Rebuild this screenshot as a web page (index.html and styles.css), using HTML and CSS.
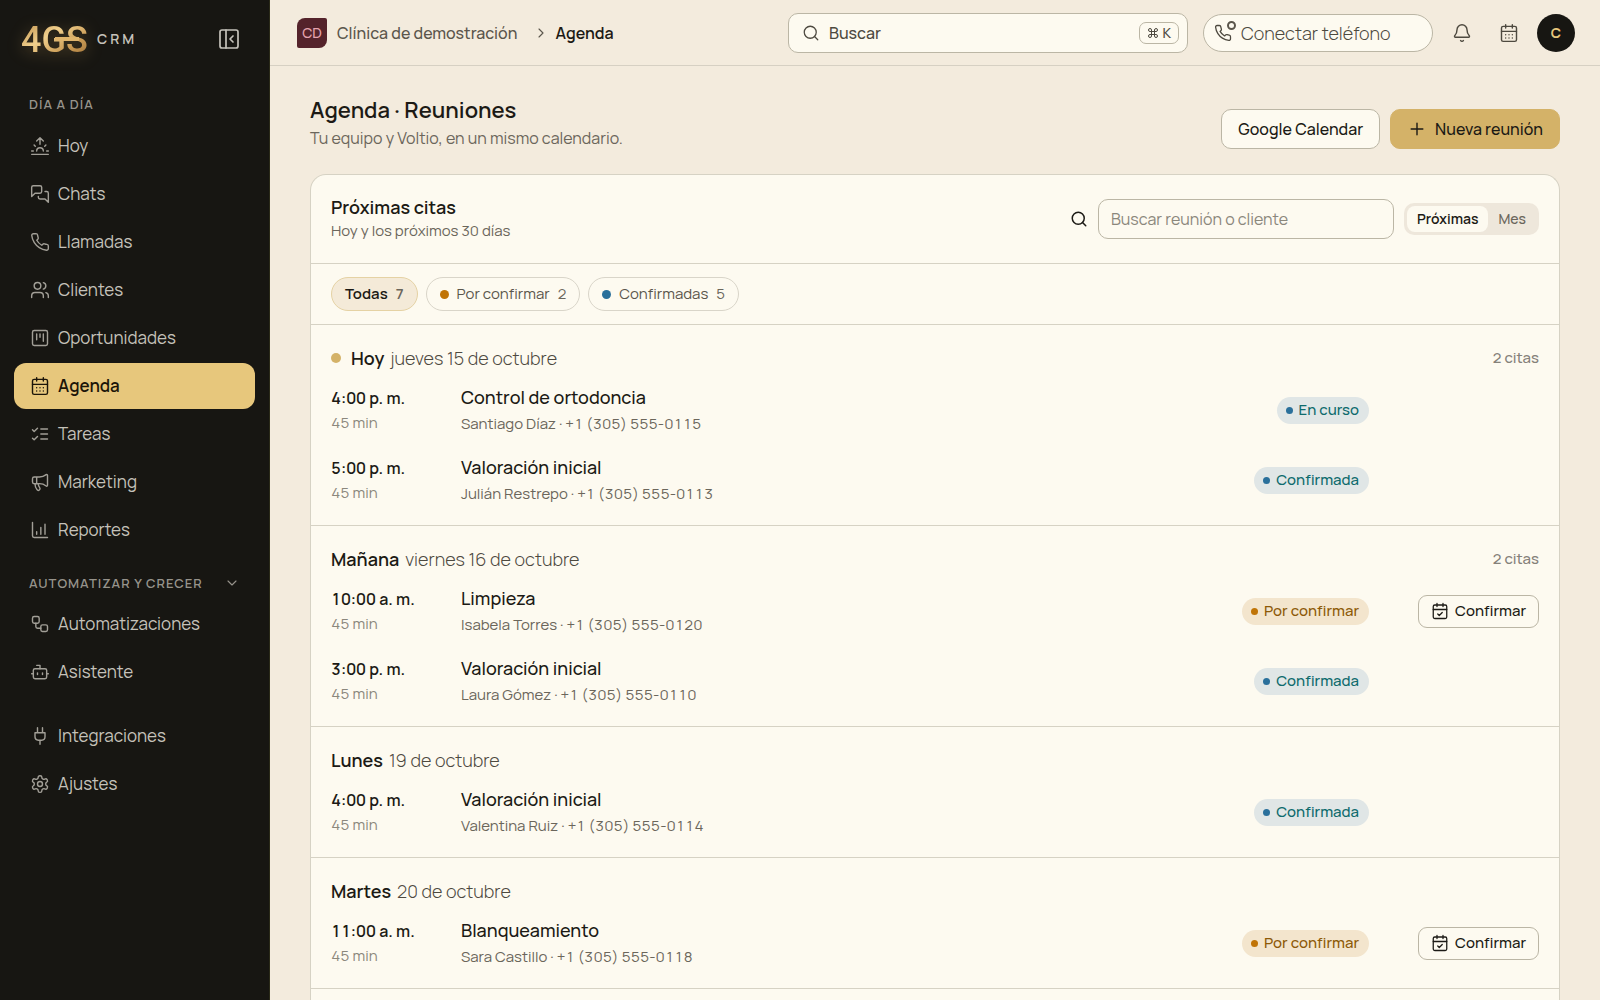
FILE: index.html
```html
<!DOCTYPE html>
<html lang="es">

<head>
    <meta charset="UTF-8">
    <meta name="viewport" content="width=device-width, initial-scale=1.0">
    <title>Agenda</title>
    <link rel="stylesheet" href="styles.css">
</head>

<body>
    <!-- Icon sprite -->
    <svg class="sprite" aria-hidden="true">
        <symbol id="i-calendar" viewBox="0 0 24 24"><path d="M8 2v4M16 2v4M3 10h18M8 14h.01M12 14h.01M16 14h.01M8 18h.01M12 18h.01M16 18h.01"/><rect x="3" y="4" width="18" height="18" rx="2"/></symbol>
        <symbol id="i-calendar-check" viewBox="0 0 24 24"><path d="M8 2v4M16 2v4M3 10h18M9 16l2 2 4-4"/><rect x="3" y="4" width="18" height="18" rx="2"/></symbol>
        <symbol id="i-search" viewBox="0 0 24 24"><circle cx="11" cy="11" r="8"/><path d="m21 21-4.3-4.3"/></symbol>
        <symbol id="i-phone" viewBox="0 0 24 24"><path d="M22 16.92v3a2 2 0 0 1-2.18 2 19.79 19.79 0 0 1-8.63-3.07 19.5 19.5 0 0 1-6-6 19.79 19.79 0 0 1-3.07-8.67A2 2 0 0 1 4.11 2h3a2 2 0 0 1 2 1.72 12.84 12.84 0 0 0 .7 2.81 2 2 0 0 1-.45 2.11L8.09 9.91a16 16 0 0 0 6 6l1.27-1.27a2 2 0 0 1 2.11-.45 12.84 12.84 0 0 0 2.81.7A2 2 0 0 1 22 16.92z"/></symbol>
    </svg>

    <div class="layout">
        <aside class="sidebar">
            <div class="brand">
                <svg class="logo" width="68" height="30" viewBox="0 0 68 30" role="img" aria-label="4GS">
                    <defs>
                        <linearGradient id="gold" x1="0" y1="0" x2="1" y2="1">
                            <stop offset="0" stop-color="#b98a45"/>
                            <stop offset="0.4" stop-color="#f0cf8c"/>
                            <stop offset="0.7" stop-color="#c99a54"/>
                            <stop offset="1" stop-color="#9a6c34"/>
                        </linearGradient>
                    </defs>
                    <text class="logo-text" x="0" y="28" fill="url(#gold)">4GS</text>
                    <rect x="34" y="13" width="24" height="4" fill="#dfb46c"/>
                </svg>
                <span class="brand-name">CRM</span>
                <button class="collapse" aria-label="Contraer menú">
                    <svg class="icon icon-lg" viewBox="0 0 24 24"><rect x="3" y="3" width="18" height="18" rx="2"/><path d="M9 3v18M16 15l-3-3 3-3"/></svg>
                </button>
            </div>

            <h2 class="nav-title">DÍA A DÍA</h2>
            <nav class="nav">
                <a href="#"><svg class="icon" viewBox="0 0 24 24"><path d="M12 2v8M4.93 10.93l1.41 1.41M2 18h2M20 18h2M19.07 10.93l-1.41 1.41M22 22H2M8 6l4-4 4 4M16 18a4 4 0 0 0-8 0"/></svg>Hoy</a>
                <a href="#"><svg class="icon" viewBox="0 0 24 24"><path d="M14 9a2 2 0 0 1-2 2H6l-4 4V4a2 2 0 0 1 2-2h8a2 2 0 0 1 2 2zM18 9h2a2 2 0 0 1 2 2v11l-4-4h-6a2 2 0 0 1-2-2v-1"/></svg>Chats</a>
                <a href="#"><svg class="icon"><use href="#i-phone"/></svg>Llamadas</a>
                <a href="#"><svg class="icon" viewBox="0 0 24 24"><path d="M16 21v-2a4 4 0 0 0-4-4H6a4 4 0 0 0-4 4v2"/><circle cx="9" cy="7" r="4"/><path d="M22 21v-2a4 4 0 0 0-3-3.87M16 3.13a4 4 0 0 1 0 7.75"/></svg>Clientes</a>
                <a href="#"><svg class="icon" viewBox="0 0 24 24"><rect x="3" y="3" width="18" height="18" rx="2"/><path d="M8 7v7M12 7v4M16 7v9"/></svg>Oportunidades</a>
                <a href="#" class="active"><svg class="icon"><use href="#i-calendar"/></svg>Agenda</a>
                <a href="#"><svg class="icon" viewBox="0 0 24 24"><path d="m3 17 2 2 4-4M3 7l2 2 4-4M13 6h8M13 12h8M13 18h8"/></svg>Tareas</a>
                <a href="#"><svg class="icon" viewBox="0 0 24 24"><path d="M11 6a13 13 0 0 0 8.4-2.8A1 1 0 0 1 21 4v12a1 1 0 0 1-1.6.8A13 13 0 0 0 11 14H5a2 2 0 0 1-2-2V8a2 2 0 0 1 2-2zM6 14a12 12 0 0 0 2.4 7.2 2 2 0 0 0 3.2-2.4A8 8 0 0 1 10 14M8 6v8"/></svg>Marketing</a>
                <a href="#"><svg class="icon" viewBox="0 0 24 24"><path d="M3 3v16a2 2 0 0 0 2 2h16M13 17V9M18 17V5M8 17v-3"/></svg>Reportes</a>
            </nav>

            <button class="nav-title nav-toggle">AUTOMATIZAR Y CRECER
                <svg class="icon icon-sm" viewBox="0 0 24 24"><path d="m6 9 6 6 6-6"/></svg>
            </button>
            <nav class="nav">
                <a href="#"><svg class="icon" viewBox="0 0 24 24"><rect x="3" y="3" width="8" height="8" rx="2"/><path d="M7 11v4a2 2 0 0 0 2 2h4"/><rect x="13" y="13" width="8" height="8" rx="2"/></svg>Automatizaciones</a>
                <a href="#"><svg class="icon" viewBox="0 0 24 24"><path d="M12 8V4H8"/><rect x="4" y="8" width="16" height="12" rx="2"/><path d="M2 14h2M20 14h2M15 13v2M9 13v2"/></svg>Asistente</a>
            </nav>
            <nav class="nav nav-bottom">
                <a href="#"><svg class="icon" viewBox="0 0 24 24"><path d="M12 22v-5M9 8V2M15 8V2M18 8v5a4 4 0 0 1-4 4h-4a4 4 0 0 1-4-4V8z"/></svg>Integraciones</a>
                <a href="#"><svg class="icon" viewBox="0 0 24 24"><path d="M12.22 2h-.44a2 2 0 0 0-2 2v.18a2 2 0 0 1-1 1.73l-.43.25a2 2 0 0 1-2 0l-.15-.08a2 2 0 0 0-2.73.73l-.22.38a2 2 0 0 0 .73 2.73l.15.1a2 2 0 0 1 1 1.72v.51a2 2 0 0 1-1 1.74l-.15.09a2 2 0 0 0-.73 2.73l.22.38a2 2 0 0 0 2.73.73l.15-.08a2 2 0 0 1 2 0l.43.25a2 2 0 0 1 1 1.73V20a2 2 0 0 0 2 2h.44a2 2 0 0 0 2-2v-.18a2 2 0 0 1 1-1.73l.43-.25a2 2 0 0 1 2 0l.15.08a2 2 0 0 0 2.73-.73l.22-.39a2 2 0 0 0-.73-2.73l-.15-.08a2 2 0 0 1-1-1.74v-.5a2 2 0 0 1 1-1.74l.15-.09a2 2 0 0 0 .73-2.73l-.22-.38a2 2 0 0 0-2.73-.73l-.15.08a2 2 0 0 1-2 0l-.43-.25a2 2 0 0 1-1-1.73V4a2 2 0 0 0-2-2z"/><circle cx="12" cy="12" r="3"/></svg>Ajustes</a>
            </nav>
        </aside>

        <div class="page">
            <header class="topbar">
                <div class="crumbs">
                    <span class="org-badge">CD</span>
                    <a href="#">Clínica de demostración</a>
                    <svg class="icon icon-sm" viewBox="0 0 24 24"><path d="m9 18 6-6-6-6"/></svg>
                    <strong>Agenda</strong>
                </div>
                <button class="global-search">
                    <svg class="icon icon-md"><use href="#i-search"/></svg>
                    <span>Buscar</span>
                    <kbd><svg class="icon icon-cmd" viewBox="0 0 24 24"><path d="M15 6v12a3 3 0 1 0 3-3H6a3 3 0 1 0 3 3V6a3 3 0 1 0-3 3h12a3 3 0 1 0-3-3"/></svg>K</kbd>
                </button>
                <button class="phone-button">
                    <span class="phone-icon">
                        <svg class="icon icon-md"><use href="#i-phone"/></svg>
                        <i class="phone-status"></i>
                    </span>
                    Conectar teléfono
                </button>
                <div class="topbar-icons">
                    <button class="icon-button" aria-label="Notificaciones">
                        <svg class="icon" viewBox="0 0 24 24"><path d="M10.27 21a2 2 0 0 0 3.46 0M3.26 15.33A1 1 0 0 0 4 17h16a1 1 0 0 0 .74-1.67C19.41 13.96 18 12.5 18 8A6 6 0 0 0 6 8c0 4.5-1.41 5.96-2.74 7.33"/></svg>
                    </button>
                    <button class="icon-button" aria-label="Calendario">
                        <svg class="icon"><use href="#i-calendar"/></svg>
                    </button>
                    <button class="avatar">C</button>
                </div>
            </header>

            <main class="content">
                <div class="page-head">
                    <div>
                        <h1>Agenda · Reuniones</h1>
                        <p>Tu equipo y Voltio, en un mismo calendario.</p>
                    </div>
                    <div class="page-actions">
                        <button class="btn">Google Calendar</button>
                        <button class="btn btn-gold"><svg class="icon" viewBox="0 0 24 24"><path d="M5 12h14M12 5v14"/></svg>Nueva reunión</button>
                    </div>
                </div>

                <section class="card">
                    <div class="card-head">
                        <div>
                            <h2>Próximas citas</h2>
                            <p>Hoy y los próximos 30 días</p>
                        </div>
                        <div class="card-tools">
                            <label for="search" aria-label="Buscar reunión o cliente"><svg class="icon icon-md"><use href="#i-search"/></svg></label>
                            <input id="search" type="text" placeholder="Buscar reunión o cliente">
                            <div class="segmented">
                                <button class="selected">Próximas</button>
                                <button>Mes</button>
                            </div>
                        </div>
                    </div>

                    <div class="filters">
                        <button class="chip selected">Todas <span>7</span></button>
                        <button class="chip"><i class="dot orange"></i>Por confirmar <span>2</span></button>
                        <button class="chip"><i class="dot blue"></i>Confirmadas <span>5</span></button>
                    </div>

                    <div class="day">
                        <div class="day-head">
                            <i class="dot gold"></i>
                            <h3>Hoy</h3>
                            <span>jueves 15 de octubre</span>
                            <small>2 citas</small>
                        </div>
                        <div class="row">
                            <div class="time"><b>4:00 p. m.</b><span>45 min</span></div>
                            <div class="info"><b>Control de ortodoncia</b><span>Santiago Díaz · <span class="tel">+1 (305) 555-0115</span></span></div>
                            <span class="status blue">En curso</span>
                        </div>
                        <div class="row">
                            <div class="time"><b>5:00 p. m.</b><span>45 min</span></div>
                            <div class="info"><b>Valoración inicial</b><span>Julián Restrepo · <span class="tel">+1 (305) 555-0113</span></span></div>
                            <span class="status blue">Confirmada</span>
                        </div>
                    </div>

                    <div class="day">
                        <div class="day-head">
                            <h3>Mañana</h3>
                            <span>viernes 16 de octubre</span>
                            <small>2 citas</small>
                        </div>
                        <div class="row">
                            <div class="time"><b>10:00 a. m.</b><span>45 min</span></div>
                            <div class="info"><b>Limpieza</b><span>Isabela Torres · <span class="tel">+1 (305) 555-0120</span></span></div>
                            <span class="status orange">Por confirmar</span>
                            <button class="confirm"><svg class="icon icon-md"><use href="#i-calendar-check"/></svg>Confirmar</button>
                        </div>
                        <div class="row">
                            <div class="time"><b>3:00 p. m.</b><span>45 min</span></div>
                            <div class="info"><b>Valoración inicial</b><span>Laura Gómez · <span class="tel">+1 (305) 555-0110</span></span></div>
                            <span class="status blue">Confirmada</span>
                        </div>
                    </div>

                    <div class="day">
                        <div class="day-head">
                            <h3>Lunes</h3>
                            <span>19 de octubre</span>
                        </div>
                        <div class="row">
                            <div class="time"><b>4:00 p. m.</b><span>45 min</span></div>
                            <div class="info"><b>Valoración inicial</b><span>Valentina Ruiz · <span class="tel">+1 (305) 555-0114</span></span></div>
                            <span class="status blue">Confirmada</span>
                        </div>
                    </div>

                    <div class="day">
                        <div class="day-head">
                            <h3>Martes</h3>
                            <span>20 de octubre</span>
                        </div>
                        <div class="row">
                            <div class="time"><b>11:00 a. m.</b><span>45 min</span></div>
                            <div class="info"><b>Blanqueamiento</b><span>Sara Castillo · <span class="tel">+1 (305) 555-0118</span></span></div>
                            <span class="status orange">Por confirmar</span>
                            <button class="confirm"><svg class="icon icon-md"><use href="#i-calendar-check"/></svg>Confirmar</button>
                        </div>
                    </div>
                </section>
            </main>
        </div>
    </div>
</body>

</html>
```
FILE: styles.css
```css
* {
    box-sizing: border-box;
    margin: 0;
    padding: 0;
}

body {
    font-family: Manrope, Inter, "Liberation Sans", sans-serif;
    font-size: 16px;
    line-height: 24px;
    color: #1c1a15;
    background-color: #f3ebdd;
    -webkit-font-smoothing: antialiased;
}

button,
input,
kbd {
    font: inherit;
    color: inherit;
}

button {
    background: none;
    border: none;
    cursor: pointer;
}

a {
    color: inherit;
    text-decoration: none;
}

.sprite {
    display: none;
}

.icon {
    width: 20px;
    height: 20px;
    flex: none;
    fill: none;
    stroke: currentColor;
    stroke-width: 1.7;
    stroke-linecap: round;
    stroke-linejoin: round;
}

.icon-sm {
    width: 16px;
    height: 16px;
}

.icon-md {
    width: 18px;
    height: 18px;
}

.icon-lg {
    width: 24px;
    height: 24px;
}

.layout {
    display: flex;
    min-height: 100vh;
}

/* Sidebar */
.sidebar {
    width: 270px;
    flex: none;
    padding: 24px 14px;
    background-color: #171612;
    border-right: 1px solid #2a2a18;
    color: #c5c2ba;
}

.brand {
    display: flex;
    align-items: center;
    height: 30px;
    padding: 0 14px 0 7px;
    margin-bottom: 38px;
}

.logo {
    overflow: visible;
    filter: drop-shadow(0 3px 8px rgba(214, 170, 90, 0.3));
}

.logo-text {
    font-family: Roboto, sans-serif;
    font-size: 36px;
    font-weight: 500;
}

.brand-name {
    margin-left: 8px;
    font-size: 14px;
    font-weight: 600;
    letter-spacing: 3px;
}

.collapse {
    display: flex;
    margin-left: auto;
}

.nav-title {
    padding: 0 15px;
    margin-bottom: 7px;
    font-size: 13px;
    line-height: 24px;
    font-weight: 600;
    letter-spacing: 1px;
    color: #96938b;
}

.nav-toggle {
    display: flex;
    justify-content: space-between;
    align-items: center;
    width: 100%;
    margin: 18px 0 6px;
    text-align: left;
}

.nav {
    display: flex;
    flex-direction: column;
    gap: 2px;
}

.nav-bottom {
    margin-top: 18px;
}

.nav a {
    display: flex;
    align-items: center;
    gap: 8px;
    height: 46px;
    padding: 0 16px;
    border-radius: 12px;
    font-size: 17px;
}

.nav .icon {
    color: #a29f97;
}

.nav .active {
    background-color: #e7c77c;
    color: #1c1509;
    font-weight: 600;
}

.nav .active .icon {
    color: #1c1509;
}

/* Top bar */
.page {
    flex: 1;
    min-width: 0;
    display: flex;
    flex-direction: column;
}

.topbar {
    display: flex;
    align-items: center;
    height: 66px;
    padding: 0 25px 0 27px;
    border-bottom: 1px solid #d6d0c3;
}

.crumbs {
    display: flex;
    align-items: center;
    margin-right: auto;
    font-weight: 500;
    color: #5b564c;
}

.crumbs .icon {
    margin: 0 6px 0 16px;
}

.crumbs strong {
    font-weight: 600;
    color: #1c1a15;
}

.org-badge {
    width: 30px;
    height: 30px;
    margin-right: 10px;
    border-radius: 8px 2px 8px 2px;
    background-color: #54232b;
    color: #e6a3ae;
    font-size: 14px;
    line-height: 30px;
    text-align: center;
}

.global-search {
    display: flex;
    align-items: center;
    gap: 9px;
    width: 400px;
    height: 40px;
    padding: 0 8px 0 13px;
    border: 1px solid #bbb6a5;
    border-radius: 10px;
    background-color: #fdfaf0;
    color: #4d493f;
    font-weight: 500;
}

.global-search kbd {
    display: flex;
    align-items: center;
    gap: 3px;
    height: 22px;
    margin-left: auto;
    padding: 0 7px;
    border: 1px solid #bbb6a5;
    border-radius: 7px;
    font-size: 14px;
}

.icon-cmd {
    width: 12px;
    height: 12px;
    stroke-width: 2;
}

.phone-button {
    display: flex;
    align-items: center;
    gap: 9px;
    width: 230px;
    height: 38px;
    margin-left: 15px;
    padding: 0 10px;
    border: 1px solid #bbb6a5;
    border-radius: 19px;
    background-color: #fdfaf0;
    color: #4d493f;
    font-size: 18px;
    font-weight: 300;
}

.phone-icon {
    position: relative;
    display: flex;
}

.phone-status {
    position: absolute;
    top: -3px;
    right: -4px;
    width: 9px;
    height: 9px;
    border: 2px solid #5b564c;
    border-radius: 50%;
    background-color: #fdfaf0;
}

.topbar-icons {
    display: flex;
    align-items: center;
    gap: 9px;
    margin-left: 10px;
}

.icon-button {
    display: flex;
    align-items: center;
    justify-content: center;
    width: 38px;
    height: 38px;
    color: #4d493f;
}

.avatar {
    width: 38px;
    height: 38px;
    border-radius: 50%;
    background-color: #171612;
    color: #e7c77c;
    font-size: 14px;
    font-weight: 700;
}

/* Content */
.content {
    flex: 1;
    display: flex;
    flex-direction: column;
    padding: 28px 40px 0;
}

.page-head {
    display: flex;
    justify-content: space-between;
    align-items: flex-end;
    padding-bottom: 24px;
}

h1 {
    font-size: 22px;
    line-height: 32px;
    font-weight: 600;
}

.page-head p {
    color: #6b665b;
}

.page-actions {
    display: flex;
    gap: 10px;
    margin-bottom: 1px;
}

.btn {
    display: flex;
    align-items: center;
    gap: 8px;
    height: 40px;
    padding: 0 16px;
    border: 1px solid #bbb6a5;
    border-radius: 10px;
    background-color: #fdfaf0;
    font-weight: 500;
}

.btn-gold {
    border-color: #d4b268;
    background-color: #d4b268;
}

.card {
    flex: 1;
    border: 1px solid #d6d2c4;
    border-bottom: none;
    border-radius: 16px 16px 0 0;
    background-color: #fdfaf0;
}

.card-head {
    display: flex;
    justify-content: space-between;
    align-items: center;
    padding: 20px;
    border-bottom: 1px solid #d6d2c4;
}

h2 {
    font-size: 18px;
    font-weight: 600;
}

.card-head p {
    font-size: 15px;
    color: #6b665b;
}

.card-tools {
    display: flex;
    align-items: center;
    gap: 10px;
}

.card-tools label {
    display: flex;
}

.card-tools label .icon {
    stroke-width: 2;
}

.card-tools input {
    width: 296px;
    height: 40px;
    padding: 0 12px;
    border: 1px solid #bbb6a5;
    border-radius: 10px;
    background-color: #fdfaf0;
}

.card-tools input::placeholder {
    color: #8b877c;
}

.segmented {
    display: flex;
    padding: 3px;
    border-radius: 10px;
    background-color: #eee7db;
    font-size: 14px;
    font-weight: 500;
    color: #6b665b;
}

.segmented button {
    height: 26px;
    padding: 0 10px;
    border-radius: 8px;
}

.segmented .selected {
    background-color: #fdfaf0;
    color: #1c1a15;
    font-weight: 600;
}

.filters {
    display: flex;
    gap: 8px;
    padding: 13px 20px;
    border-bottom: 1px solid #d6d2c4;
}

.chip {
    display: flex;
    align-items: center;
    gap: 8px;
    height: 34px;
    padding: 0 13px;
    border: 1px solid #d9d5c9;
    border-radius: 17px;
    font-size: 15px;
    color: #5b564c;
}

.chip span {
    color: #6b665b;
}

.chip.selected {
    border-color: #e5d2a4;
    background-color: #f4ead8;
    color: #1c1a15;
    font-weight: 600;
}

.dot {
    width: 9px;
    height: 9px;
    border-radius: 50%;
}

.dot.orange {
    background-color: #c07406;
}

.dot.blue {
    background-color: #2a709b;
}

.dot.gold {
    width: 10px;
    height: 10px;
    margin-right: 4px;
    background-color: #d4b268;
}

.day {
    padding: 18px 20px 10px;
    border-bottom: 1px solid #d6d2c4;
}

.day-head {
    display: flex;
    align-items: center;
    gap: 6px;
    height: 30px;
    margin-bottom: 2px;
    font-size: 18px;
    font-weight: 300;
    color: #4d493f;
}

.day-head h3 {
    font-size: 18px;
    font-weight: 600;
    color: #1c1a15;
}

.day-head small {
    margin-left: auto;
    font-size: 15px;
    font-weight: 500;
    color: #85817a;
}

.row {
    display: grid;
    grid-template-columns: 120px 1fr auto 160px;
    align-items: center;
    gap: 10px;
    height: 70px;
}

.row b {
    display: block;
    font-weight: 600;
}

.time {
    font-variant-numeric: tabular-nums;
}

.time span {
    font-size: 15px;
    color: #8b877c;
}

.info b {
    margin-bottom: 2px;
    font-size: 18px;
    font-weight: 500;
}

.info span {
    font-size: 15px;
    color: #6b665b;
}

.info .tel {
    font-variant-numeric: tabular-nums;
}

.status {
    display: flex;
    align-items: center;
    gap: 6px;
    height: 27px;
    padding: 0 10px 0 9px;
    border-radius: 14px;
    font-size: 15px;
    font-weight: 500;
}

.status::before {
    content: "";
    width: 7px;
    height: 7px;
    border-radius: 50%;
}

.status.blue {
    background-color: #e0e6e6;
    color: #0e6b6d;
}

.status.blue::before {
    background-color: #2a709b;
}

.status.orange {
    background-color: #f3e5cd;
    color: #8d5a08;
}

.status.orange::before {
    background-color: #c07406;
}

.confirm {
    display: flex;
    align-items: center;
    justify-self: end;
    gap: 6px;
    height: 33px;
    padding: 0 12px;
    border: 1px solid #bbb6a5;
    border-radius: 9px;
    font-size: 15px;
    font-weight: 500;
}
```
